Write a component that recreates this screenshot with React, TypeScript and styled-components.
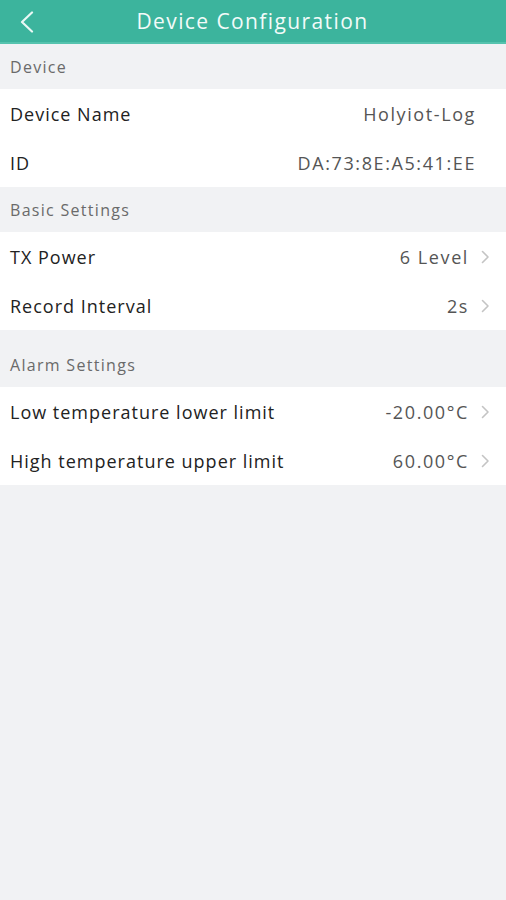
import styled, { createGlobalStyle } from "styled-components";

const GlobalStyle = createGlobalStyle`
  html, body {
    margin: 0;
    padding: 0;
    background: #f1f2f4;
    font-family: "Open Sans", "Lato", sans-serif;
  }
`

type Item = { label: string; value: string; link?: boolean }
type Group = { title: string; tall?: boolean; items: Item[] }

const groups: Group[] = [
  {
    title: "Device",
    items: [
      { label: "Device Name", value: "Holyiot-Log" },
      { label: "ID", value: "DA:73:8E:A5:41:EE" },
    ],
  },
  {
    title: "Basic Settings",
    items: [
      { label: "TX Power", value: "6 Level", link: true },
      { label: "Record Interval", value: "2s", link: true },
    ],
  },
  {
    title: "Alarm Settings",
    tall: true,
    items: [
      { label: "Low temperature lower limit", value: "-20.00°C", link: true },
      { label: "High temperature upper limit", value: "60.00°C", link: true },
    ],
  },
]

function Chevron() {
  return (
    <S.Chevron width="9" height="14" viewBox="0 0 9 14">
      <path d="M1.5 1.5 L7 7 L1.5 12.5" fill="none" stroke="#c4c4c4" strokeWidth="1.6" strokeLinecap="round" strokeLinejoin="round" />
    </S.Chevron>
  )
}

export default function App() {
  return (
    <S.Page>
      <GlobalStyle />
      <S.Header>
        <S.Back>
          <svg width="16" height="22" viewBox="0 0 16 22">
            <path d="M13 1.5 L3 11 L13 20.5" fill="none" stroke="#eaf8f5" strokeWidth="2.2" strokeLinecap="round" strokeLinejoin="round" />
          </svg>
        </S.Back>
        <S.Title>Device Configuration</S.Title>
      </S.Header>
      {groups.map((g) => (
        <section key={g.title}>
          <S.GroupTitle $tall={g.tall}>{g.title}</S.GroupTitle>
          <S.List>
            {g.items.map((it) => (
              <S.Row key={it.label}>
                <S.Label>{it.label}</S.Label>
                <S.Value $link={it.link}>{it.value}</S.Value>
                {it.link && <Chevron />}
              </S.Row>
            ))}
          </S.List>
        </section>
      ))}
    </S.Page>
  )
}

const S: any = {};

S.Page = styled.div`
  width: 506px;
  min-height: 900px;
  background: #f1f2f4;
`
S.Header = styled.header`
  position: relative;
  display: flex;
  align-items: center;
  justify-content: center;
  height: 42px;
  background: #3cb49d;
  border-bottom: 2px solid #55c3ae;
`
S.Back = styled.div`
  position: absolute;
  left: 19px;
  top: 11px;
  display: flex;
`
S.Title = styled.h1`
  margin: 0 0 0 -1px;
  font-size: 21px;
  font-weight: 400;
  color: #f2fbf9;
  letter-spacing: 1.4px;
`
S.GroupTitle = styled.div`
  display: flex;
  align-items: ${(p: any) => (p.$tall ? "flex-end" : "center")};
  height: ${(p: any) => (p.$tall ? "57px" : "45px")};
  padding: ${(p: any) => (p.$tall ? "0 10px 11px" : "0 10px")};
  box-sizing: border-box;
  font-size: 16px;
  color: #6a6a6a;
  letter-spacing: 1.3px;
`
S.List = styled.div`
  background: #fff;
`
S.Row = styled.div`
  display: flex;
  align-items: center;
  height: 49px;
  padding: 0 16px 0 10px;
`
S.Label = styled.span`
  flex: 1;
  font-size: 18px;
  color: #222;
  letter-spacing: 1px;
`
S.Value = styled.span`
  font-size: 18px;
  color: #555;
  letter-spacing: 1.6px;
  margin-right: ${(p: any) => (p.$link ? "12px" : "14px")};
`
S.Chevron = styled.svg`
  flex: none;
`
